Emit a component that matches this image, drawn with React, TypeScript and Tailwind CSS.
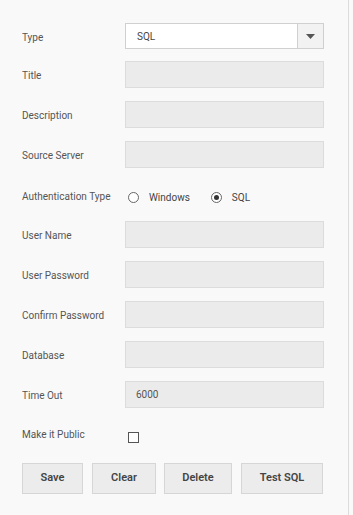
import React from "react";

const font = { fontFamily: "Roboto, 'Liberation Sans', sans-serif" };

type FieldProps = { label: string; value?: string; className?: string };

const Label = ({ text }: { text: string }) => (
  <span className="w-[103px] shrink-0 pt-[2px] text-[10px] text-[#555]">{text}</span>
);

const Field = ({ label, value, className = "mt-[13px]" }: FieldProps) => (
  <div className={`flex items-center h-[27px] ${className}`}>
    <Label text={label} />
    <div className="flex-1 h-full bg-[#ebebeb] border border-[#dcdcdc] flex items-center pl-[10px] text-[10px] text-[#555]">
      {value}
    </div>
  </div>
);

const Radio = ({ label, checked }: { label: string; checked?: boolean }) => (
  <label className="flex items-center">
    <span className="w-[11px] h-[11px] rounded-full border border-[#666] bg-white flex items-center justify-center">
      {checked && <span className="w-[5px] h-[5px] rounded-full bg-[#333]" />}
    </span>
    <span className="ml-[10px] text-[10px] text-[#444]">{label}</span>
  </label>
);

export default function App() {
  return (
    <div className="w-[353px] h-[515px] bg-[#f9f9f9]" style={font}>
      <div className="w-[349px] h-full border-r border-[#dcdcdc] pl-[22px] pr-[24px] pt-[23px] flex flex-col">
        {/* Type select */}
        <div className="flex items-center h-[26px]">
          <Label text="Type" />
          <div className="flex-1 h-full flex border border-[#d0d0d0] bg-white">
            <div className="flex-1 flex items-center pl-[11px] text-[10px] text-[#444]">SQL</div>
            <div className="w-[26px] border-l border-[#d0d0d0] bg-[#f2f2f2] flex items-center justify-center">
              <svg width="9" height="5" viewBox="0 0 9 5">
                <path d="M0 0h9L4.5 5z" fill="#555" />
              </svg>
            </div>
          </div>
        </div>

        <Field label="Title" className="mt-[12px]" />
        <Field label="Description" />
        <Field label="Source Server" />

        {/* Authentication */}
        <div className="flex items-center h-[27px] mt-[14px]">
          <Label text="Authentication Type" />
          <div className="flex items-center gap-[21px] ml-[3px] pt-[3px]">
            <Radio label="Windows" />
            <Radio label="SQL" checked />
          </div>
        </div>

        <Field label="User Name" className="mt-[12px]" />
        <Field label="User Password" />
        <Field label="Confirm Password" />
        <Field label="Database" />
        <Field label="Time Out" value="6000" />

        {/* Public */}
        <div className="flex items-start mt-[20px]">
          <span className="w-[103px] shrink-0 text-[10px] leading-[14px] text-[#555]">Make it Public</span>
          <span className="mt-[4px] ml-[3px] w-[11px] h-[11px] border border-[#555] bg-white" />
        </div>

        {/* Buttons */}
        <div className="flex mt-[20px] h-[31px] text-[11px] font-semibold text-[#444]">
          <button className="w-[61px] bg-[#ececec] border border-[#d6d6d6]">Save</button>
          <button className="w-[64px] ml-[9px] bg-[#ececec] border border-[#d6d6d6]">Clear</button>
          <button className="w-[68px] ml-[8px] bg-[#ececec] border border-[#d6d6d6]">Delete</button>
          <button className="w-[82px] ml-[9px] bg-[#ececec] border border-[#d6d6d6]">Test SQL</button>
        </div>
      </div>
    </div>
  );
}
